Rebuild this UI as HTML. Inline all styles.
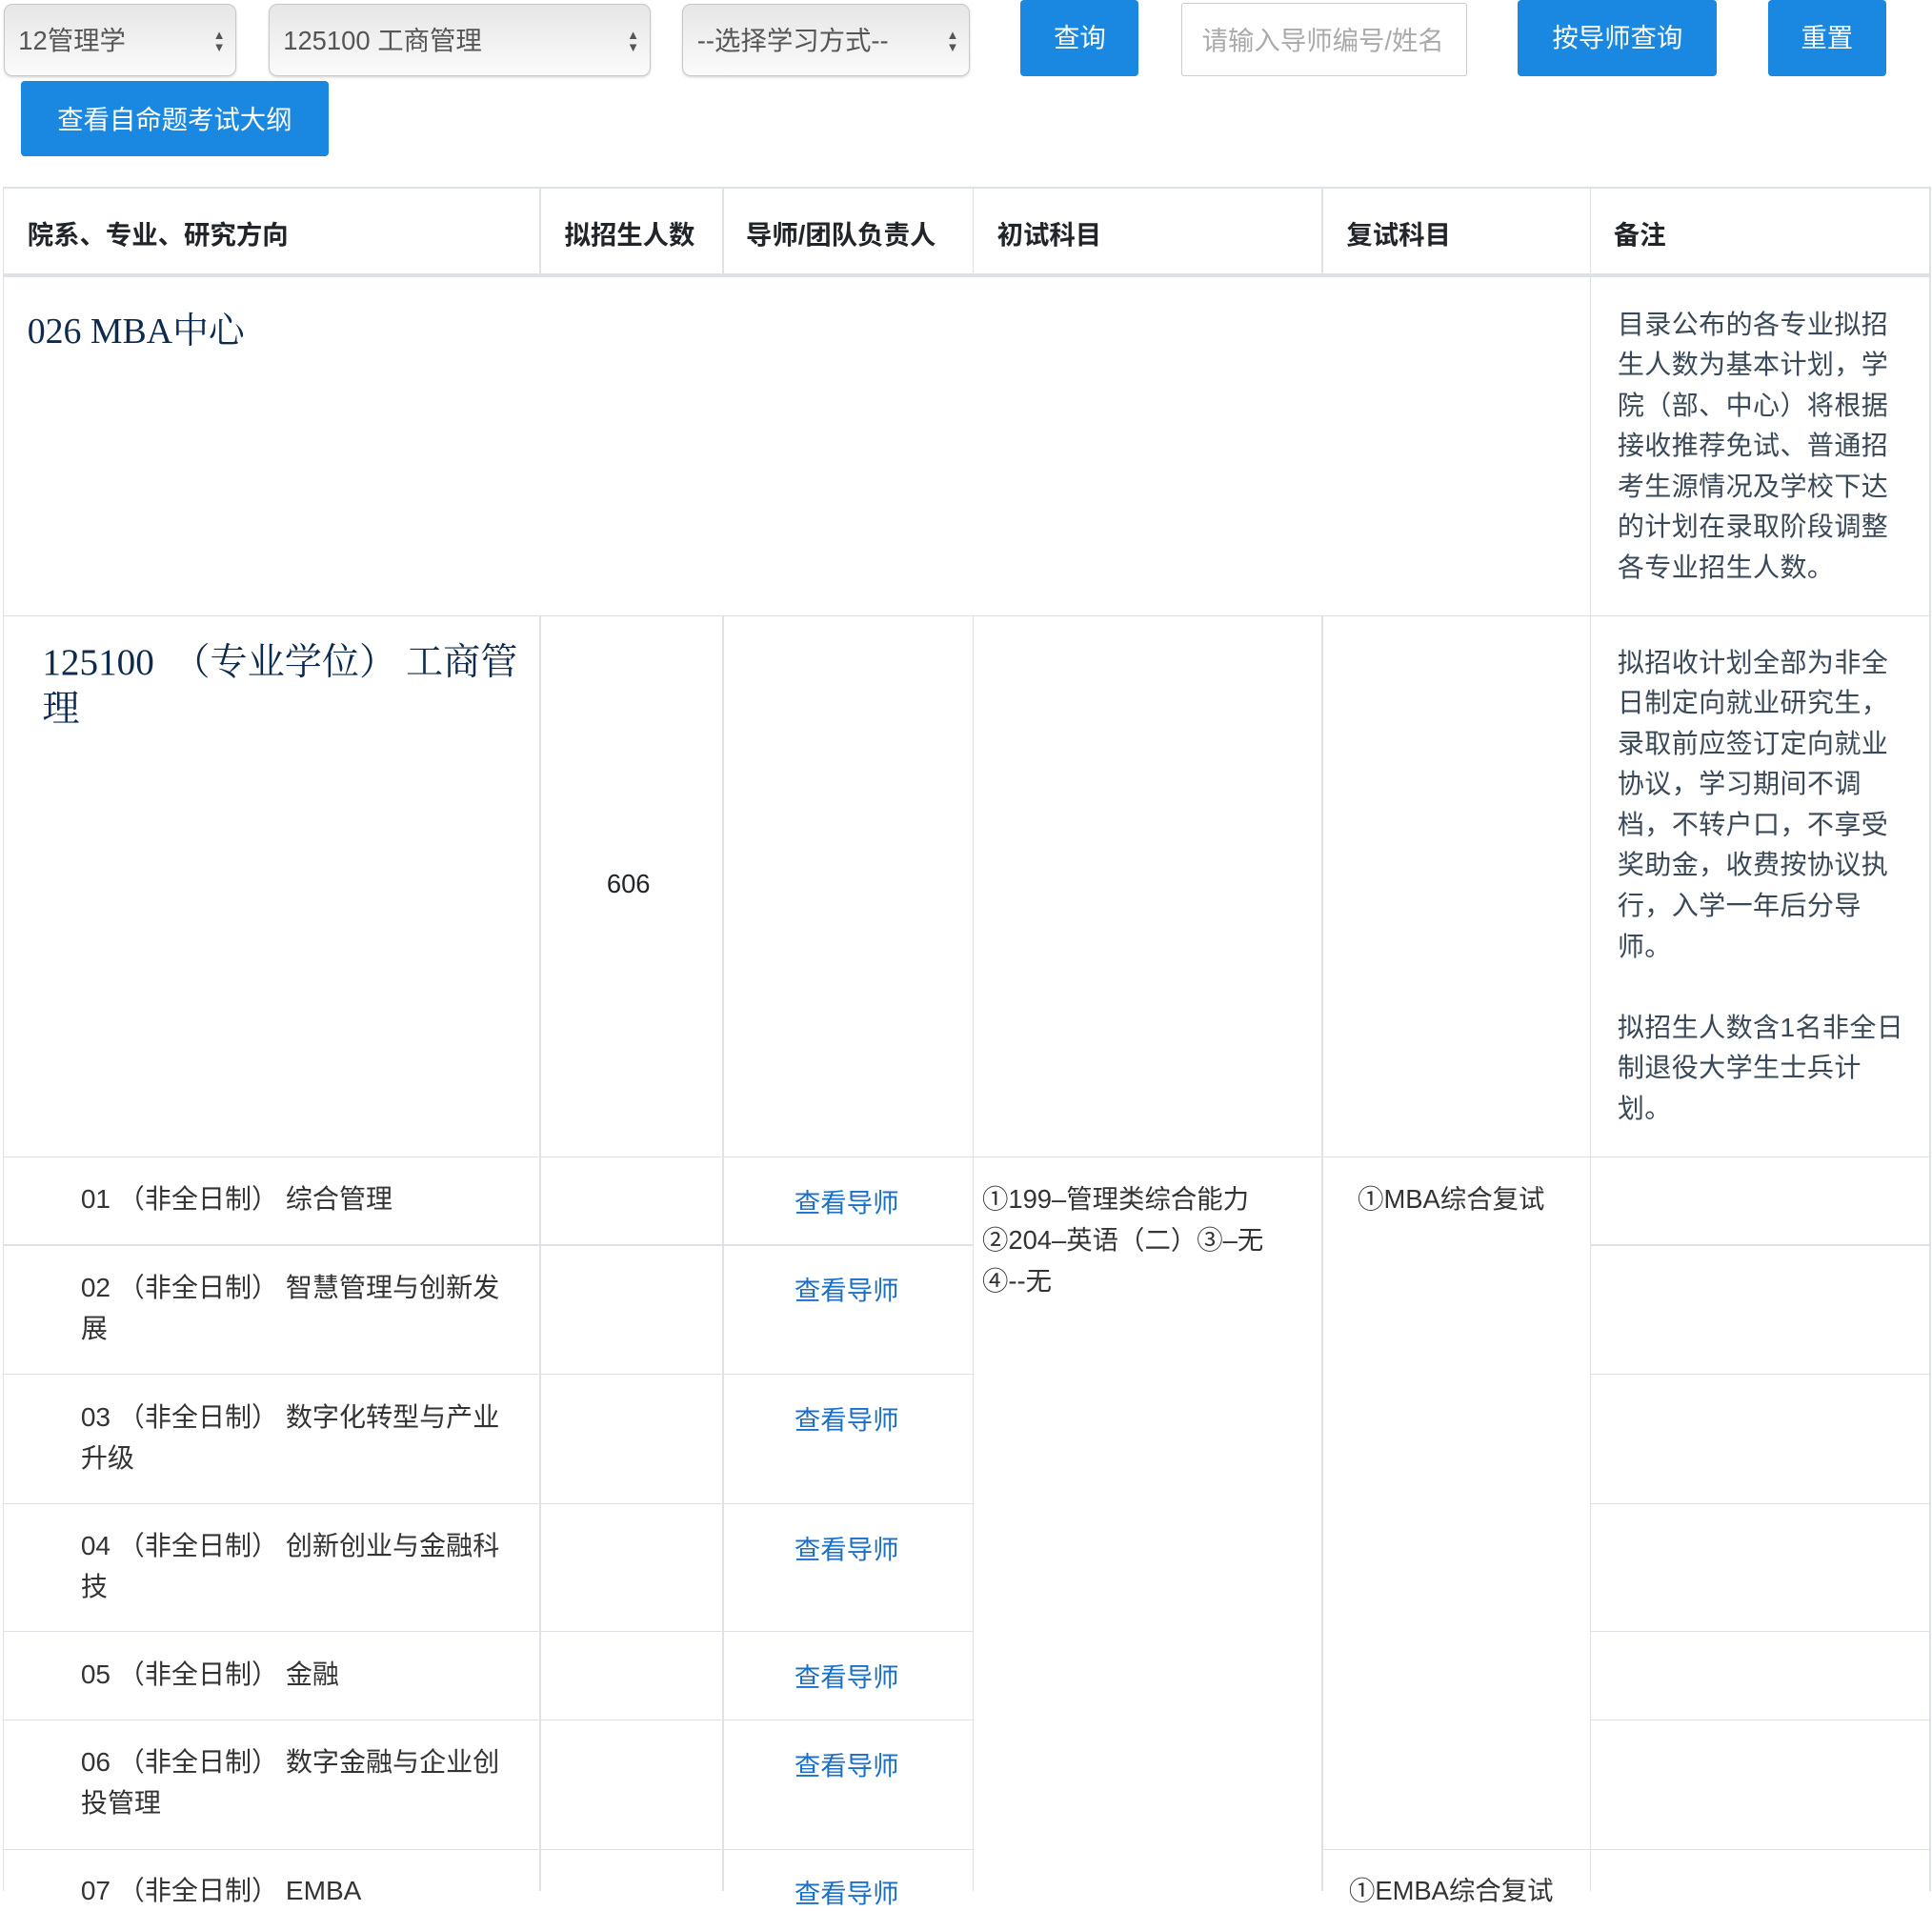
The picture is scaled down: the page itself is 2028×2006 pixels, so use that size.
<!DOCTYPE html>
<html><head><meta charset="utf-8">
<style>
html,body{margin:0;padding:0;background:#fff;}
body{width:2028px;height:1984px;overflow:hidden;}
#w{zoom:1.30502;position:relative;width:1554px;height:1521px;font-family:"Liberation Sans","Noto Sans CJK SC",sans-serif;color:#212529;}
.a{position:absolute;}
.sel{position:absolute;top:3px;height:58px;border:1px solid #c8c8c8;border-radius:7px;background:linear-gradient(#e6e6e6,#fbfbfb);box-shadow:0 1px 2px rgba(0,0,0,.15);font-size:21px;color:#555;line-height:58px;padding-left:11px;box-sizing:border-box;}
.sel i{position:absolute;right:8px;top:19px;font-style:normal;font-size:10px;line-height:10px;color:#555;}
.btn{position:absolute;background:#1a87e0;color:#fff;font-size:21px;text-align:center;border-radius:3px;}
.h{position:absolute;background:#dee2e6;height:1px;}
.v{position:absolute;background:#dee2e6;width:1px;}
.th{position:absolute;top:172px;font-size:21px;font-weight:bold;color:#212529;}
.note{position:absolute;left:1301px;font-size:21.5px;line-height:32.6px;color:#3a4858;letter-spacing:0.3px;}
.r{position:absolute;left:65px;font-size:21.5px;line-height:33px;color:#333;}
.lk{position:absolute;left:639px;font-size:21px;color:#1a6fc9;}
.serif{font-family:"Liberation Serif","Noto Serif CJK SC",serif;color:#0d2b4e;white-space:nowrap;}
</style></head><body><div id="w">
<div class="sel" style="left:3px;width:187px">12管理学<i>▲<br>▼</i></div>
<div class="sel" style="left:216px;width:307px">125100 工商管理<i>▲<br>▼</i></div>
<div class="sel" style="left:549px;width:231px">--选择学习方式--<i>▲<br>▼</i></div>
<div class="btn" style="left:821px;top:0;width:95px;height:61px;line-height:61px">查询</div>
<div class="a" style="left:950px;top:2px;width:230px;height:59px;border:1px solid #ccc;border-radius:2px;font-size:21px;color:#aaa;line-height:59px;padding-left:16px;box-sizing:border-box;overflow:hidden;white-space:nowrap">请输入导师编号/姓名</div>
<div class="btn" style="left:1221px;top:0;width:160px;height:61px;line-height:61px">按导师查询</div>
<div class="btn" style="left:1422px;top:0;width:95px;height:61px;line-height:61px">重置</div>
<div class="btn" style="left:17px;top:65px;width:247px;height:61px;line-height:63px">查看自命题考试大纲</div>

<div class="h" style="left:2px;top:150px;width:1551px;height:2px"></div>
<div class="h" style="left:2px;top:220px;width:1551px;height:3px"></div>
<div class="h" style="left:2px;top:495px;width:1551px"></div>
<div class="h" style="left:2px;top:930px;width:1551px"></div>
<div class="h" style="left:2px;top:1001px;width:780px"></div><div class="h" style="left:1279px;top:1001px;width:274px"></div>
<div class="h" style="left:2px;top:1105px;width:780px"></div><div class="h" style="left:1279px;top:1105px;width:274px"></div>
<div class="h" style="left:2px;top:1209px;width:780px"></div><div class="h" style="left:1279px;top:1209px;width:274px"></div>
<div class="h" style="left:2px;top:1312px;width:780px"></div><div class="h" style="left:1279px;top:1312px;width:274px"></div>
<div class="h" style="left:2px;top:1383px;width:780px"></div><div class="h" style="left:1279px;top:1383px;width:274px"></div>
<div class="h" style="left:2px;top:1487px;width:780px"></div><div class="h" style="left:1063px;top:1487px;width:490px"></div>
<div class="v" style="left:2px;top:150px;height:1371px"></div>
<div class="v" style="left:1552px;top:150px;height:1371px"></div>
<div class="v" style="left:434px;top:150px;height:72px"></div><div class="v" style="left:434px;top:495px;height:1026px"></div>
<div class="v" style="left:581px;top:150px;height:72px"></div><div class="v" style="left:581px;top:495px;height:1026px"></div>
<div class="v" style="left:782px;top:150px;height:72px"></div><div class="v" style="left:782px;top:495px;height:1026px"></div>
<div class="v" style="left:1063px;top:150px;height:72px"></div><div class="v" style="left:1063px;top:495px;height:1026px"></div>
<div class="v" style="left:1279px;top:150px;height:1371px"></div>

<div class="th" style="left:22px">院系、专业、研究方向</div>
<div class="th" style="left:454px">拟招生人数</div>
<div class="th" style="left:600px">导师/团队负责人</div>
<div class="th" style="left:802px">初试科目</div>
<div class="th" style="left:1083px">复试科目</div>
<div class="th" style="left:1298px">备注</div>

<div class="a serif" style="left:22px;top:242px;font-size:29px">026 MBA中心</div>
<div class="note" style="top:245px">目录公布的各专业拟招<br>生人数为基本计划，学<br>院（部、中心）将根据<br>接收推荐免试、普通招<br>考生源情况及学校下达<br>的计划在录取阶段调整<br>各专业招生人数。</div>

<div class="a serif" style="left:34px;top:514px;font-size:30px;line-height:38px">125100 &nbsp;（专业学位） 工商管<br>理</div>
<div class="a" style="left:488px;top:699px;font-size:21px">606</div>
<div class="note" style="top:517px">拟招收计划全部为非全<br>日制定向就业研究生，<br>录取前应签订定向就业<br>协议，学习期间不调<br>档，不转户口，不享受<br>奖助金，收费按协议执<br>行，入学一年后分导<br>师。<br><br>拟招生人数含1名非全日<br>制退役大学生士兵计<br>划。</div>

<div class="r" style="top:948px">01 （非全日制） 综合管理</div>
<div class="r" style="top:1019px">02 （非全日制） 智慧管理与创新发<br>展</div>
<div class="r" style="top:1123px">03 （非全日制） 数字化转型与产业<br>升级</div>
<div class="r" style="top:1227px">04 （非全日制） 创新创业与金融科<br>技</div>
<div class="r" style="top:1330px">05 （非全日制） 金融</div>
<div class="r" style="top:1401px">06 （非全日制） 数字金融与企业创<br>投管理</div>
<div class="r" style="top:1504px">07 （非全日制） EMBA</div>

<div class="lk" style="top:950px">查看导师</div>
<div class="lk" style="top:1021px">查看导师</div>
<div class="lk" style="top:1125px">查看导师</div>
<div class="lk" style="top:1229px">查看导师</div>
<div class="lk" style="top:1332px">查看导师</div>
<div class="lk" style="top:1403px">查看导师</div>
<div class="lk" style="top:1506px">查看导师</div>

<div class="a" style="left:790px;top:948px;font-size:21px;line-height:33px;color:#333">①199–管理类综合能力<br>②204–英语（二）③–无<br>④--无</div>
<div class="a" style="left:1092px;top:948px;font-size:21px;line-height:33px;color:#333">①MBA综合复试</div>
<div class="a" style="left:1085px;top:1504px;font-size:21px;line-height:33px;color:#333">①EMBA综合复试</div>
</div></body></html>
